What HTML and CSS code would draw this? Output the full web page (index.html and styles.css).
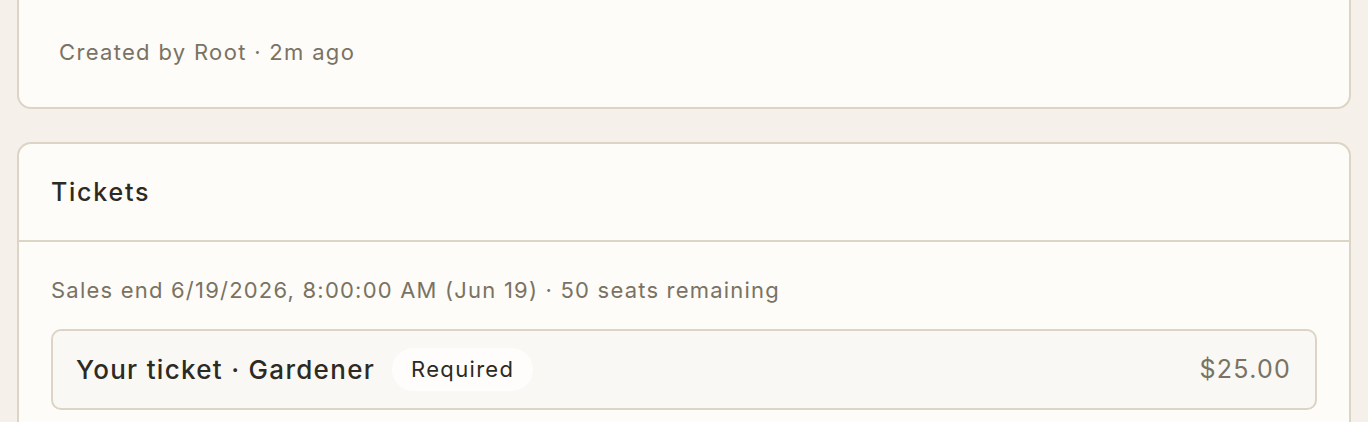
FILE: index.html
```html
<!DOCTYPE html>
<html lang="en">
<head>
    <meta charset="UTF-8">
    <meta name="viewport" content="width=device-width, initial-scale=1.0">
    <title>Event</title>
    <link rel="stylesheet" href="styles.css">
</head>
<body>

    <!-- Event summary card (top cut off) -->
    <section class="card card-summary">
        <p class="meta">Created by Root · 2m ago</p>
    </section>

    <!-- Tickets -->
    <section class="card">
        <header class="card-head">
            <h2>Tickets</h2>
        </header>
        <div class="card-body">
            <p class="sales">Sales end 6/19/2026, 8:00:00 AM (Jun 19) · 50 seats remaining</p>
            <div class="ticket">
                <div class="ticket-name">
                    <span>Your ticket · Gardener</span>
                    <span class="pill">Required</span>
                </div>
                <span class="price">$25.00</span>
            </div>
        </div>
    </section>

</body>
</html>
```

FILE: styles.css
```css
body {
    margin: 0;
    padding: 0 17px 40px;
    background: #f5f1ea;
    font-family: Inter, "Noto Sans", sans-serif;
    color: #2d2a24;
}
.card {
    background: #fdfcf8;
    border: 2px solid #dcd4c4;
    border-radius: 14px;
    margin-bottom: 33px;
}
.card-summary {
    border-top: none;
    border-top-left-radius: 0;
    border-top-right-radius: 0;
    padding: 37px 40px 40px;
}
.meta {
    margin: 0;
    font-size: 22px;
    line-height: 30px;
    letter-spacing: 0.06em;
    color: #7a7263;
}
.card-head {
    padding: 32px;
    border-bottom: 2px solid #dcd4c4;
}
.card-head h2 {
    margin: 0;
    font-size: 25px;
    line-height: 32px;
    font-weight: 500;
    letter-spacing: 0.07em;
    color: #2d2a24;
}
.card-body {
    padding: 33px 32px 32px;
}
.sales {
    margin: 0 0 24px;
    font-size: 22px;
    line-height: 30px;
    letter-spacing: 0.055em;
    color: #7a7263;
}
.ticket {
    display: flex;
    align-items: center;
    justify-content: space-between;
    background: #f9f8f4;
    border: 2px solid #dcd4c4;
    border-radius: 10px;
    padding: 17px 24px 17px 23px;
}
.ticket-name {
    display: flex;
    align-items: center;
    gap: 17px;
    font-size: 26px;
    font-weight: 500;
    letter-spacing: 0.05em;
}
.pill {
    background: #fefdfb;
    border-radius: 22px;
    padding: 6px 19px;
    font-size: 22px;
    font-weight: 400;
    line-height: 31px;
    letter-spacing: 0.06em;
}
.price {
    font-size: 25px;
    line-height: 31px;
    letter-spacing: 0.05em;
    color: #7a7263;
}
```
